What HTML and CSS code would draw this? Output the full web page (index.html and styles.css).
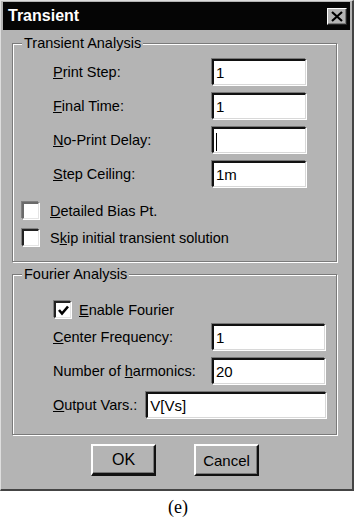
FILE: index.html
```html
<!DOCTYPE html>
<html lang="en">
<head>
    <meta charset="UTF-8">
    <meta name="viewport" content="width=device-width, initial-scale=1.0">
    <title>Transient</title>
    <link rel="stylesheet" href="styles.css">
</head>
<body>
    <div class="window">
        <div class="titlebar">
            <span class="title">Transient</span>
            <div class="close">
                <svg width="12" height="11" viewBox="0 0 12 11">
                    <path d="M1 1 L11 10 M11 1 L1 10" stroke="#000" stroke-width="2.2" fill="none"/>
                </svg>
            </div>
        </div>

        <div class="content">
            <fieldset class="group">
                <legend>Transient Analysis</legend>
                <div class="rows">
                    <div class="row">
                        <label class="label"><u>P</u>rint Step:</label>
                        <div class="field short">1</div>
                    </div>
                    <div class="row">
                        <label class="label"><u>F</u>inal Time:</label>
                        <div class="field short">1</div>
                    </div>
                    <div class="row">
                        <label class="label"><u>N</u>o-Print Delay:</label>
                        <div class="field short"><span class="caret"></span></div>
                    </div>
                    <div class="row">
                        <label class="label"><u>S</u>tep Ceiling:</label>
                        <div class="field short">1m</div>
                    </div>
                </div>
                <div class="checks">
                    <div class="check-row">
                        <div class="checkbox focus"></div>
                        <span><u>D</u>etailed Bias Pt.</span>
                    </div>
                    <div class="check-row">
                        <div class="checkbox"></div>
                        <span>S<u>k</u>ip initial transient solution</span>
                    </div>
                </div>
            </fieldset>

            <fieldset class="group second">
                <legend>Fourier Analysis</legend>
                <div class="check-row enable">
                    <div class="checkbox">
                        <svg width="13" height="13" viewBox="0 0 13 13">
                            <path d="M2 6 L5 9.5 L11 2.5" stroke="#000" stroke-width="2.6" fill="none"/>
                        </svg>
                    </div>
                    <span><u>E</u>nable Fourier</span>
                </div>
                <div class="rows">
                    <div class="row">
                        <label class="label"><u>C</u>enter Frequency:</label>
                        <div class="field long">1</div>
                    </div>
                    <div class="row">
                        <label class="label">Number of <u>h</u>armonics:</label>
                        <div class="field long">20</div>
                    </div>
                    <div class="row">
                        <label class="label auto"><u>O</u>utput Vars.:</label>
                        <div class="field wide">V[Vs]</div>
                    </div>
                </div>
            </fieldset>

            <div class="buttons">
                <button class="btn default">OK</button>
                <button class="btn">Cancel</button>
            </div>
        </div>
    </div>
    <p class="caption">(e)</p>
</body>
</html>
```

FILE: styles.css
```css
body {
    margin: 0;
    background-color: #fff;
    font-family: "Liberation Sans", Arial, sans-serif;
    font-size: 14.5px;
    color: #000;
}
.window {
    width: 354px;
    height: 491px;
    box-sizing: border-box;
    background-color: #b4b4b4;
    border-style: solid;
    border-width: 1px 2px 2px 1px;
    border-color: #dedede #444 #444 #dedede;
    padding: 1px 2px 0 2px;
}
.titlebar {
    height: 28px;
    background-color: #050505;
    display: flex;
    justify-content: space-between;
    align-items: center;
    padding: 0 3px 0 5px;
}
.title {
    color: #fff;
    font-weight: bold;
    font-size: 16px;
}
.close {
    width: 20px;
    height: 17px;
    box-sizing: border-box;
    background-color: #b4b4b4;
    border: 1px solid;
    border-color: #fff #222 #222 #fff;
    box-shadow: inset -1px -1px 0 #7a7a7a;
    display: flex;
    justify-content: center;
    align-items: center;
}
.content {
    padding: 5px 0 0 9px;
}
.group {
    width: 325px;
    box-sizing: border-box;
    margin: 0;
    padding: 0 0 15px 0;
    border: 1px solid #7a7a7a;
    box-shadow: inset 1px 1px 0 #fff, 1px 1px 0 #fff;
}
.group legend {
    margin-left: 9px;
    padding: 0 2px;
    line-height: 16px;
    background-color: #b4b4b4;
}
.second {
    margin-top: 4px;
    padding-bottom: 16px;
}
.rows {
    display: flex;
    flex-direction: column;
    gap: 8px;
    padding-left: 40px;
    margin-top: 8px;
}
.row {
    display: flex;
    align-items: center;
}
.label {
    width: 159px;
}
.label.auto {
    width: auto;
    margin-right: 9px;
}
.field {
    height: 26px;
    box-sizing: border-box;
    background-color: #fff;
    border-style: solid;
    border-width: 2px 1px 1px 2px;
    border-color: #111 #d8d8d8 #d8d8d8 #111;
    box-shadow: -1px -1px 0 #777, 1px 1px 0 #fff;
    padding: 2px 2px 0 2px;
    font-size: 15px;
    line-height: 20px;
}
.short {
    width: 94px;
}
.long {
    width: 113px;
}
.wide {
    width: 180px;
}
.caret {
    display: inline-block;
    width: 1px;
    height: 18px;
    background-color: #000;
    vertical-align: middle;
}
.checks {
    display: flex;
    flex-direction: column;
    gap: 10px;
    margin-top: 15px;
    padding-left: 9px;
}
.check-row {
    display: flex;
    align-items: center;
    gap: 11px;
}
.checkbox {
    width: 17px;
    height: 17px;
    box-sizing: border-box;
    background-color: #fff;
    border-style: solid;
    border-width: 2px 1px 1px 2px;
    border-color: #222 #e4e4e4 #e4e4e4 #222;
    box-shadow: -1px -1px 0 #808080, 1px 1px 0 #fff;
    display: flex;
    justify-content: center;
    align-items: center;
}
.checkbox.focus {
    border-color: #6a6a6a #e4e4e4 #e4e4e4 #6a6a6a;
}
.enable {
    margin-top: 19px;
    padding-left: 41px;
    gap: 8px;
}
.enable + .rows {
    margin-top: 6px;
}
.buttons {
    display: flex;
    gap: 38px;
    padding-left: 79px;
    margin-top: 9px;
}
.btn {
    width: 65px;
    height: 32px;
    box-sizing: border-box;
    background-color: #b4b4b4;
    font-family: "Liberation Sans", Arial, sans-serif;
    font-size: 15px;
    color: #000;
    border-style: solid;
    border-width: 2px 2px 2px 2px;
    border-color: #fff #111 #111 #fff;
    box-shadow: inset -1px -1px 0 #777;
    padding: 0;
}
.btn.default {
    font-size: 16px;
    border-bottom-width: 3px;
}
.caption {
    margin: 6px 0 0 0;
    text-align: center;
    font-family: "Liberation Serif", "Times New Roman", serif;
    font-size: 18px;
    line-height: 20px;
}
```
